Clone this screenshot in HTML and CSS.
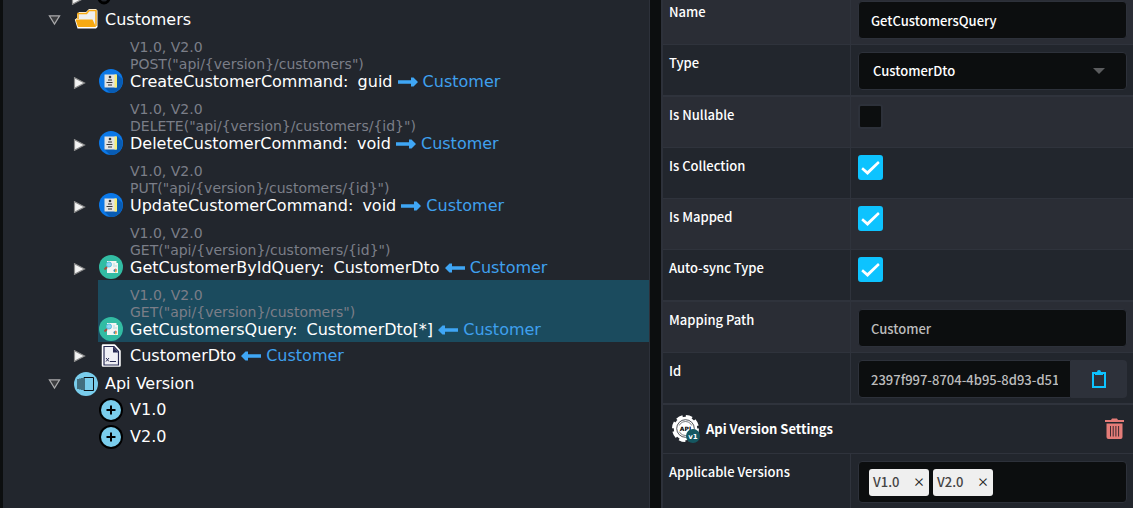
FILE: index.html
```html
<!DOCTYPE html>
<html lang="en">
<head>
  <meta charset="UTF-8">
  <title>Services Designer</title>
  <link rel="stylesheet" href="styles.css">
</head>
<body>
  <!-- Shared icons -->
  <svg class="sprite" aria-hidden="true">
    <symbol id="i-open" viewBox="0 0 14 12"><path d="M1.5 1.5h11L7 10.5z" fill="#3c3d40" stroke="#a9a9ab" stroke-width="1.3"/></symbol>
    <symbol id="i-closed" viewBox="0 0 12 12"><path d="M1 .7v10.6L11 6z" fill="#f4f4f4" stroke="#8d8d8d" stroke-width="1.2"/></symbol>
    <symbol id="i-command" viewBox="0 0 24 24">
      <circle cx="12" cy="12" r="12" fill="#0b78e8"/>
      <path d="M18 5l5.6 5.2A12 12 0 0 1 11 24l-6-6z" fill="#085cb4"/>
      <path d="M5.500 5.500h12v13h-12z" fill="#e4e4e2"/>
      <path d="M15.500 5.500h2.500v13h-2.500z" fill="#f5ee7a"/>
      <circle cx="11" cy="8" r="1.300" fill="#333"/>
      <path d="M9 11h4M7.500 13.500h6M9 16h4" stroke="#333" stroke-width="1"/>
    </symbol>
    <symbol id="i-query" viewBox="0 0 24 24">
      <circle cx="12" cy="12" r="12" fill="#32bca3"/>
      <path d="M8 6h9.500v2h1.500v10H8z" fill="#f3f5f4"/>
      <path d="M15 8v4M17 10v2" stroke="#b5dcdd" stroke-width="1"/>
      <path d="M8 12l-2.500 2.500" stroke="#a74c3d" stroke-width="2"/>
      <circle cx="10" cy="9.500" r="2.500" fill="#8fd5f4" stroke="#58bfe1"/>
      <circle cx="16" cy="15.500" r="1.500" fill="#3b8eb0"/>
      <path d="M16 15.500v-2a2 2 0 0 1 2 2z" fill="#ef7661"/>
      <path d="M16 15.500h2a2 2 0 0 1-2 2z" fill="#f0b63d"/>
    </symbol>
    <symbol id="i-right" viewBox="0 0 20 10"><path d="M0 3.300h13V.5h2.500L20 5l-4.500 4.500H13V6.700H0z" fill="#3fa6f5"/></symbol>
    <symbol id="i-left" viewBox="0 0 20 10"><path d="M20 3.300H7V.5H4.500L0 5l4.500 4.500H7V6.700h13z" fill="#3fa6f5"/></symbol>
    <symbol id="i-version" viewBox="0 0 24 24">
      <circle cx="12" cy="12" r="12" fill="#000"/>
      <circle cx="12" cy="12" r="10" fill="#7acdec"/>
      <path d="M12 7.500v9M7.500 12h9" stroke="#000" stroke-width="2"/>
    </symbol>
  </svg>

  <main class="designer">
    <section class="tree" aria-label="Services">
      <div class="node parent-node">
        <svg class="twisty"><use href="#i-closed"/></svg>
        <svg class="icon" viewBox="0 0 24 24"><circle cx="8" cy="17" r="5" fill="none" stroke="#000" stroke-width="3"/></svg>
      </div>
      <ul class="nodes">
        <li>
          <div class="node branch">
            <svg class="twisty"><use href="#i-open"/></svg>
            <div class="content">
              <svg class="icon" viewBox="0 0 24 24">
                <path d="M3 6.500L5 4h7l3-3h7l1.500 1.500V19L22 20.500H3.500L.8 11.500 3 10z" fill="#fff"/>
                <path d="M4 11V5.500h8.500l2.500-3h7V18" fill="#efefef" stroke="#f7a911" stroke-width="1.500"/>
                <path d="M1.500 11.500h17L22 19H4z" fill="#f7a911"/>
              </svg>
              <span class="title">Customers</span>
            </div>
          </div>
          <ul class="nodes">
            <li class="node operation">
              <svg class="twisty"><use href="#i-closed"/></svg>
              <div class="content">
                <svg class="icon"><use href="#i-command"/></svg>
                <div>
                  <div class="meta">V1.0, V2.0</div>
                  <div class="meta">POST("api/{version}/customers")</div>
                  <div class="title">CreateCustomerCommand: <span class="type">guid</span> <svg class="arrow"><use href="#i-right"/></svg><span class="mapped">Customer</span></div>
                </div>
              </div>
            </li>
            <li class="node operation">
              <svg class="twisty"><use href="#i-closed"/></svg>
              <div class="content">
                <svg class="icon"><use href="#i-command"/></svg>
                <div>
                  <div class="meta">V1.0, V2.0</div>
                  <div class="meta">DELETE("api/{version}/customers/{id}")</div>
                  <div class="title">DeleteCustomerCommand: <span class="type">void</span> <svg class="arrow"><use href="#i-right"/></svg><span class="mapped">Customer</span></div>
                </div>
              </div>
            </li>
            <li class="node operation">
              <svg class="twisty"><use href="#i-closed"/></svg>
              <div class="content">
                <svg class="icon"><use href="#i-command"/></svg>
                <div>
                  <div class="meta">V1.0, V2.0</div>
                  <div class="meta">PUT("api/{version}/customers/{id}")</div>
                  <div class="title">UpdateCustomerCommand: <span class="type">void</span> <svg class="arrow"><use href="#i-right"/></svg><span class="mapped">Customer</span></div>
                </div>
              </div>
            </li>
            <li class="node operation">
              <svg class="twisty"><use href="#i-closed"/></svg>
              <div class="content">
                <svg class="icon"><use href="#i-query"/></svg>
                <div>
                  <div class="meta">V1.0, V2.0</div>
                  <div class="meta">GET("api/{version}/customers/{id}")</div>
                  <div class="title">GetCustomerByIdQuery: <span class="type">CustomerDto</span> <svg class="arrow"><use href="#i-left"/></svg><span class="mapped">Customer</span></div>
                </div>
              </div>
            </li>
            <li class="node operation">
              <span class="twisty"></span>
              <div class="content selected">
                <svg class="icon"><use href="#i-query"/></svg>
                <div>
                  <div class="meta">V1.0, V2.0</div>
                  <div class="meta">GET("api/{version}/customers")</div>
                  <div class="title">GetCustomersQuery: <span class="type">CustomerDto[*]</span> <svg class="arrow"><use href="#i-left"/></svg><span class="mapped">Customer</span></div>
                </div>
              </div>
            </li>
            <li class="node">
              <svg class="twisty"><use href="#i-closed"/></svg>
              <div class="content">
                <svg class="icon" viewBox="0 0 24 24">
                  <path d="M4 1.500h11.500L20.500 7v14.500H4z" fill="#f1f1f6" stroke="#fff" stroke-width="2.500" stroke-linejoin="round"/>
                  <path d="M5 2.500h10L19.500 7.500V21H5z" fill="#f1f1f6" stroke="#292c54" stroke-width="1.200"/>
                  <path d="M14 2.500v6h5.500z" fill="#292c54"/>
                  <path d="M7 14l3 3.500M10 14l-3 3.500M11 17.500h6" stroke="#292c54" stroke-width="1"/>
                </svg>
                <div class="title">CustomerDto <svg class="arrow"><use href="#i-left"/></svg><span class="mapped">Customer</span></div>
              </div>
            </li>
          </ul>
        </li>
        <li>
          <div class="node branch">
            <svg class="twisty"><use href="#i-open"/></svg>
            <div class="content">
              <svg class="icon" viewBox="0 0 24 24">
                <circle cx="12" cy="12" r="12" fill="#79cdec"/>
                <path d="M10 5.500h9.500v13H10zM8 6v12M6 6.500v11M4 7v10" fill="none" stroke="#0c1013" stroke-width="1"/>
              </svg>
              <span class="title">Api Version</span>
            </div>
          </div>
          <ul class="nodes">
            <li class="node">
              <span class="twisty"></span>
              <div class="content"><svg class="icon"><use href="#i-version"/></svg><span class="title">V1.0</span></div>
            </li>
            <li class="node">
              <span class="twisty"></span>
              <div class="content"><svg class="icon"><use href="#i-version"/></svg><span class="title">V2.0</span></div>
            </li>
          </ul>
        </li>
      </ul>
    </section>

    <form class="properties">
      <div class="row">
        <label for="name">Name</label>
        <div class="value"><input class="field" type="text" id="name" value="GetCustomersQuery"></div>
      </div>
      <div class="row group-end">
        <label for="type">Type</label>
        <div class="value">
          <div class="select-wrap">
            <select class="field" id="type"><option>CustomerDto</option></select>
            <svg class="caret" viewBox="0 0 12 6"><path d="M0 0h12L6 6z" fill="#5b5c5e"/></svg>
          </div>
        </div>
      </div>
      <div class="row">
        <label for="nullable">Is Nullable</label>
        <div class="value"><input class="check" type="checkbox" id="nullable"></div>
      </div>
      <div class="row">
        <label for="collection">Is Collection</label>
        <div class="value"><input class="check" type="checkbox" id="collection" checked></div>
      </div>
      <div class="row">
        <label for="mapped">Is Mapped</label>
        <div class="value"><input class="check" type="checkbox" id="mapped" checked></div>
      </div>
      <div class="row group-end">
        <label for="autosync">Auto-sync Type</label>
        <div class="value"><input class="check" type="checkbox" id="autosync" checked></div>
      </div>
      <div class="row">
        <label for="path">Mapping Path</label>
        <div class="value"><input class="field muted" type="text" id="path" value="Customer" readonly></div>
      </div>
      <div class="row group-end">
        <label for="id">Id</label>
        <div class="value id-group">
          <input class="field muted" type="text" id="id" value="2397f997-8704-4b95-8d93-d51" readonly>
          <button class="copy" type="button" aria-label="Copy id">
            <svg width="16" height="20" viewBox="0 0 16 20"><path d="M2 4h12v14H2z" fill="none" stroke="#0dc3ff" stroke-width="2"/><path d="M4 3h2a2 2 0 0 1 4 0h2v3H4z" fill="#0dc3ff"/></svg>
          </button>
        </div>
      </div>
      <div class="stereotype">
        <svg class="gear" viewBox="0 0 28 28">
          <circle cx="13.500" cy="13.500" r="11.500" fill="none" stroke="#fff" stroke-width="4" stroke-dasharray="6 3.030"/>
          <circle cx="13.500" cy="13.500" r="11.700" fill="#fff"/>
          <circle cx="13.500" cy="13.500" r="8.800" fill="none" stroke="#22262d" stroke-width=".8"/>
          <circle cx="13.500" cy="13.500" r="7" fill="none" stroke="#22262d" stroke-width=".6"/>
          <path d="M6 10.500h15v6H6z" fill="#fff"/>
          <text x="13.500" y="16" text-anchor="middle" class="gear-api">API</text>
          <circle cx="21" cy="21" r="7" fill="#155761"/>
          <text x="21" y="23.500" text-anchor="middle" class="gear-version">v1</text>
        </svg>
        <h2>Api Version Settings</h2>
        <button class="remove" type="button" aria-label="Remove Api Version Settings">
          <svg width="19" height="22" viewBox="0 0 19 22">
            <path d="M0 2h6l1-1.500h5L13 2h6v2H0z" fill="#e47c78"/>
            <path d="M1.500 5.500h16V19q0 2-2 2h-12q-2 0-2-2z" fill="#e47c78"/>
            <path d="M5.500 8v10.500M8.200 8v10.500M10.900 8v10.500M13.600 8v10.500" stroke="#3c2a30" stroke-width="1"/>
          </svg>
        </button>
      </div>
      <div class="row">
        <span class="label">Applicable Versions</span>
        <div class="value">
          <div class="tags">
            <span class="tag">V1.0 <button type="button" aria-label="Remove V1.0">×</button></span>
            <span class="tag">V2.0 <button type="button" aria-label="Remove V2.0">×</button></span>
          </div>
        </div>
      </div>
    </form>
  </main>
</body>
</html>
```
FILE: styles.css
```css
* {
  box-sizing: border-box;
}
body {
  margin: 0;
  background-color: #0c0e0f;
  color: #fff;
  overflow: hidden;
}
.sprite {
  display: none;
}
.designer {
  display: grid;
  grid-template-columns: 647fr 472fr;
  gap: 11px;
  height: 100vh;
  padding-left: 3px;
}

/* Tree */
.tree {
  padding-left: 45px;
  background-color: #22262d;
  border-right: 1px solid #2d313a;
  font: 16px/18px "DejaVu Sans", Verdana, sans-serif;
  overflow: hidden;
}
.nodes {
  margin: 0;
  padding: 0;
  list-style: none;
}
.nodes .nodes {
  padding-left: 25px;
}
.node {
  display: flex;
  align-items: center;
  min-height: 27px;
}
.parent-node {
  height: 5px;
  min-height: 0;
  align-items: flex-end;
  padding-left: 25px;
}
.branch {
  padding-top: 3px;
}
.twisty {
  flex: none;
  width: 13px;
  height: 12px;
  margin-right: 12px;
}
.parent-node .twisty {
  margin-left: -2px;
}
.parent-node .twisty {
  margin-right: 0;
}
.content {
  display: flex;
  flex: 1;
  align-items: center;
  gap: 7px;
  padding-left: 1px;
}
.icon {
  flex: none;
  width: 24px;
  height: 24px;
}
.parent-node .icon {
  margin-left: 12px;
}
.operation {
  align-items: flex-end;
}
.operation .content {
  align-items: flex-end;
  padding-top: 7px;
  padding-bottom: 3px;
}
.operation .icon {
  margin-bottom: -2px;
}
.operation .twisty {
  margin-bottom: 5px;
}
.selected {
  background-color: #1b4b5e;
}
.meta {
  color: #7b7e88;
  font-size: 14px;
  line-height: 17px;
}
.title {
  white-space: nowrap;
}
.type {
  margin-left: 4px;
}
.arrow {
  width: 20px;
  height: 10px;
  margin-right: 5px;
}
.mapped {
  color: #3fa0ee;
}

/* Property grid */
.properties {
  border-left: 2px solid #2d313a;
  font: 13px/20px "Noto Sans CJK SC", "Source Sans Pro", sans-serif;
  font-weight: 500;
  overflow: hidden;
}
.row {
  display: grid;
  grid-template-columns: 187px 1fr;
  min-height: 51px;
  background-color: #22262d;
  border-bottom: 1px solid #2f333c;
}
.row:nth-child(odd) {
  background-color: #2a2d35;
}
.row:first-child {
  height: 45px;
  min-height: 0;
}
.row:first-child label {
  padding-top: 2px;
}
.row:first-child .value {
  padding-top: 1px;
}
.group-end {
  min-height: 52px;
  border-bottom-width: 2px;
}
.row label,
.row .label {
  padding: 8px 6px;
}
.value {
  padding: 7px 6px 5px 7px;
  border-left: 1px solid #2f333c;
}
.field {
  display: block;
  width: 100%;
  height: 38px;
  padding: 0 12px;
  background-color: #0c0e0f;
  border: 1px solid #2d313a;
  border-radius: 4px;
  color: #fff;
  font: inherit;
}
.muted {
  color: #bcbcbc;
}
.select-wrap {
  position: relative;
}
select.field {
  padding-left: 14px;
  appearance: none;
}
.caret {
  position: absolute;
  top: 16px;
  right: 22px;
  width: 12px;
  height: 6px;
  pointer-events: none;
}
.check {
  display: block;
  width: 25px;
  height: 25px;
  margin: 0;
  appearance: none;
  background-color: #0c0e0f;
  border: 2px solid #2d313a;
  border-radius: 3px;
}
.check:checked {
  background-color: #0dc3ff;
  border-color: #0dc3ff;
}
.check:checked::after {
  content: "";
  display: block;
  height: 21px;
  background-color: #fff;
  clip-path: polygon(6% 58%, 14% 49%, 35% 67%, 86% 19%, 94% 28%, 36% 86%);
}
.id-group {
  display: flex;
}
.id-group .field {
  flex: 1;
  min-width: 0;
  border-radius: 4px 0 0 4px;
}
.copy {
  display: flex;
  align-items: center;
  justify-content: center;
  width: 56px;
  height: 38px;
  padding: 0;
  background-color: #2d313a;
  border: 0;
  border-radius: 0 4px 4px 0;
}
.stereotype {
  display: flex;
  align-items: center;
  min-height: 49px;
  padding: 0 9px;
  background-color: #22262d;
  border-bottom: 1px solid #2f333c;
}
.gear {
  width: 28px;
  height: 28px;
}
.gear-api {
  font: bold 6px "DejaVu Sans", sans-serif;
}
.gear-version {
  fill: #fff;
  font: bold 7px "DejaVu Sans", sans-serif;
}
.stereotype h2 {
  flex: 1;
  margin: 0 0 0 6px;
  font-size: 13px;
  font-weight: 700;
}
.remove {
  padding: 0;
  background: none;
  border: 0;
}
.remove svg {
  display: block;
}
.tags {
  display: flex;
  align-items: center;
  gap: 4px;
  height: 42px;
  padding: 0 10px;
  background-color: #0c0e0f;
  border: 1px solid #2d313a;
  border-radius: 4px;
}
.tag {
  display: flex;
  align-items: center;
  justify-content: space-between;
  width: 60px;
  height: 27px;
  padding: 0 4px;
  background-color: #efefef;
  border-radius: 3px;
  color: #444;
}
.tag button {
  width: 12px;
  padding: 0;
  background: none;
  border: 0;
  color: #222;
  font: inherit;
  font-size: 12px;
}
```
